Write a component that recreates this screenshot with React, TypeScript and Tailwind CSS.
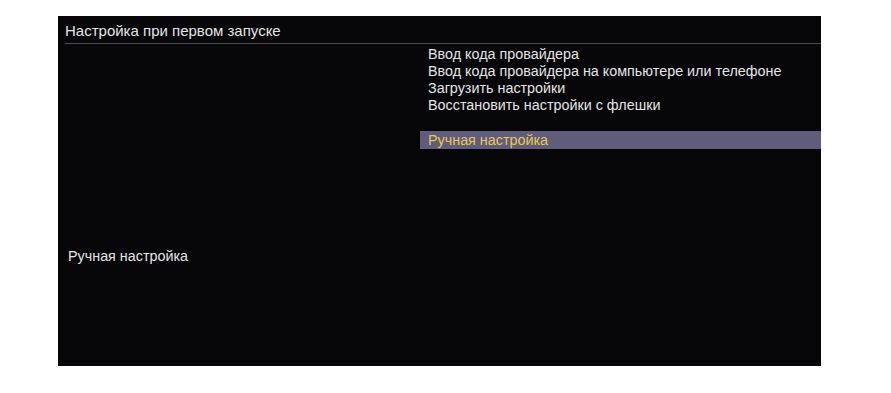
export default function App() {
  const items = [
    "Ввод кода провайдера",
    "Ввод кода провайдера на компьютере или телефоне",
    "Загрузить настройки",
    "Восстановить настройки с флешки",
    "",
  ];
  return (
    <div className="w-[891px] h-[393px] bg-white pt-[16px] pl-[58px]" style={{ fontFamily: '"Liberation Sans", Arial, sans-serif' }}>
      <div className="w-[763px] h-[350px] bg-[#060608] flex flex-col text-[14.35px] leading-[17px] text-[#e4e4e4]">
        <div className="ml-[7px] h-[28px] pt-[6px] border-b border-[#4b4f45] text-[15px]">
          Настройка при первом запуске
        </div>
        <div className="flex flex-1 pt-[2px]">
          <div className="w-[362px] pl-[10px] pt-[202px]">Ручная настройка</div>
          <div className="flex-1 flex flex-col">
            {items.map((t, i) => (
              <div key={i} className="h-[17px] pl-[8px]">{t}</div>
            ))}
            <div className="h-[18px] pl-[8px] leading-[18px] bg-[#5f5c7c] text-[#e8c84a]">Ручная настройка</div>
          </div>
        </div>
      </div>
    </div>
  );
}
